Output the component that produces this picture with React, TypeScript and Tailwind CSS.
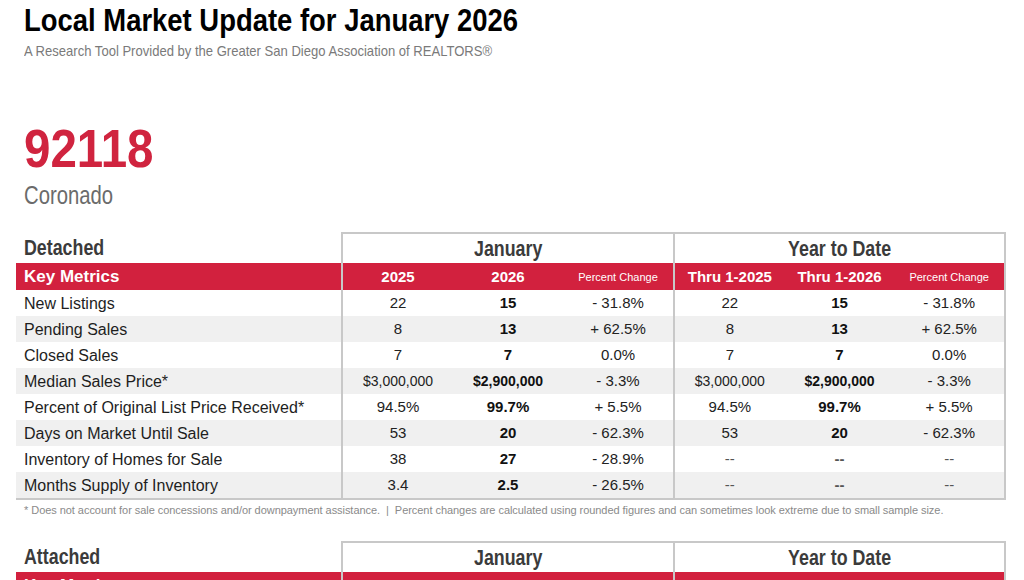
import React from "react"

const font = { fontFamily: '"Liberation Sans", Arial, sans-serif' }

type Row = {
  label: string
  cells: string[]
}

const detached: Row[] = [
  { label: "New Listings", cells: ["22", "15", "- 31.8%", "22", "15", "- 31.8%"] },
  { label: "Pending Sales", cells: ["8", "13", "+ 62.5%", "8", "13", "+ 62.5%"] },
  { label: "Closed Sales", cells: ["7", "7", "0.0%", "7", "7", "0.0%"] },
  { label: "Median Sales Price*", cells: ["$3,000,000", "$2,900,000", "- 3.3%", "$3,000,000", "$2,900,000", "- 3.3%"] },
  { label: "Percent of Original List Price Received*", cells: ["94.5%", "99.7%", "+ 5.5%", "94.5%", "99.7%", "+ 5.5%"] },
  { label: "Days on Market Until Sale", cells: ["53", "20", "- 62.3%", "53", "20", "- 62.3%"] },
  { label: "Inventory of Homes for Sale", cells: ["38", "27", "- 28.9%", "--", "--", "--"] },
  { label: "Months Supply of Inventory", cells: ["3.4", "2.5", "- 26.5%", "--", "--", "--"] },
]

const attached: Row[] = [
  { label: "New Listings", cells: ["--", "--", "--", "--", "--", "--"] },
]

function Cell({ value, bold }: { value: string; bold: boolean }) {
  const money = value.startsWith("$")
  const dash = value === "--"
  return (
    <div
      className={`flex items-center justify-center leading-[18px] ${money ? "text-[14px]" : "text-[15px]"} ${
        bold ? "font-bold text-[#111]" : "text-[#222]"
      } ${dash ? "text-[#555]" : ""}`}
    >
      {value}
    </div>
  )
}

function MarketTable({ title, rows, last }: { title: string; rows: Row[]; last: boolean }) {
  return (
    <div className="ml-4 w-[990px]">
      {/* group headings */}
      <div className="grid h-[31px] grid-cols-[325px_332px_333px]">
        <div className="flex items-center pl-2 pt-[1px]">
          <span className="inline-block origin-left scale-x-[0.81] text-[22px] font-bold leading-[26px] text-[#3b3b3b]">
            {title}
          </span>
        </div>
        <div className="flex items-center justify-center border-l-2 border-t-2 border-[#c8c8c8]">
          <span className="inline-block scale-x-[0.81] text-[22px] font-bold leading-[26px] text-[#3b3b3b]">January</span>
        </div>
        <div className="flex items-center justify-center border-x-2 border-t-2 border-[#c8c8c8]">
          <span className="inline-block scale-x-[0.81] text-[22px] font-bold leading-[26px] text-[#3b3b3b]">
            Year to Date
          </span>
        </div>
      </div>

      {/* red key metrics bar */}
      <div className="grid h-[27px] grid-cols-[325px_332px_333px] bg-[#d2213e] text-white">
        <div className="flex items-center pl-2 text-[17px] font-bold leading-[20px]">Key Metrics</div>
        <div className="grid grid-cols-3 border-l-2 border-[#c8c8c8]">
          <div className="flex items-center justify-center text-[15px] font-bold leading-[18px]">2025</div>
          <div className="flex items-center justify-center text-[15px] font-bold leading-[18px]">2026</div>
          <div className="flex items-center justify-center text-[11px] leading-[14px]">Percent Change</div>
        </div>
        <div className="grid grid-cols-3 border-x-2 border-[#c8c8c8]">
          <div className="flex items-center justify-center text-[15px] font-bold leading-[18px]">Thru 1-2025</div>
          <div className="flex items-center justify-center text-[15px] font-bold leading-[18px]">Thru 1-2026</div>
          <div className="flex items-center justify-center text-[11px] leading-[14px]">Percent Change</div>
        </div>
      </div>

      {/* metric rows */}
      {rows.map((row, i) => (
        <div
          key={row.label}
          className={`grid h-[26px] grid-cols-[325px_332px_333px] ${i % 2 === 1 ? "bg-[#f0f0f0]" : "bg-white"} ${
            last && i === rows.length - 1 ? "h-[28px] border-b-2 border-[#c8c8c8]" : ""
          }`}
        >
          <div className="flex items-center pl-2 text-[16px] leading-[19px] text-[#1e1e1e]">{row.label}</div>
          <div className="grid grid-cols-3 border-l-2 border-[#c8c8c8]">
            {row.cells.slice(0, 3).map((c, j) => (
              <Cell key={j} value={c} bold={j === 1} />
            ))}
          </div>
          <div className="grid grid-cols-3 border-x-2 border-[#c8c8c8]">
            {row.cells.slice(3).map((c, j) => (
              <Cell key={j} value={c} bold={j === 1} />
            ))}
          </div>
        </div>
      ))}
    </div>
  )
}

export default function App() {
  return (
    <div className="min-h-screen w-[1024px] overflow-hidden bg-white" style={font}>
      {/* Title */}
      <div className="px-6 pt-[3px]">
        <h1 className="whitespace-nowrap text-[31px] font-bold leading-[36px] text-black">
          <span className="inline-block origin-left scale-x-[0.885]">Local Market Update for January 2026</span>
        </h1>
        <p className="mt-[3px] whitespace-nowrap text-[15px] leading-[18px] text-[#7a7a7a]">
          <span className="inline-block origin-left scale-x-[0.87]">
            A Research Tool Provided by the Greater San Diego Association of REALTORS®
          </span>
        </p>

        <div className="mt-[58px] text-[54px] font-bold leading-[60px] text-[#d0243f]">
          <span className="inline-block origin-left scale-x-[0.88]">92118</span>
        </div>
        <div className="mt-[2px] text-[26px] leading-[30px] text-[#6b6b6b]">
          <span className="inline-block origin-left scale-x-[0.78]">Coronado</span>
        </div>
      </div>

      {/* Detached */}
      <div className="mt-[22px]">
        <MarketTable title="Detached" rows={detached} last />
      </div>
      <p className="mt-[3px] whitespace-nowrap pl-6 text-[11px] leading-[14px] tracking-[-0.05px] text-[#8a8a8a]">
        * Does not account for sale concessions and/or downpayment assistance. &nbsp;|&nbsp; Percent changes are
        calculated using rounded figures and can sometimes look extreme due to small sample size.
      </p>

      {/* Attached */}
      <div className="mt-[24px]">
        <MarketTable title="Attached" rows={attached} last={false} />
      </div>
    </div>
  )
}
